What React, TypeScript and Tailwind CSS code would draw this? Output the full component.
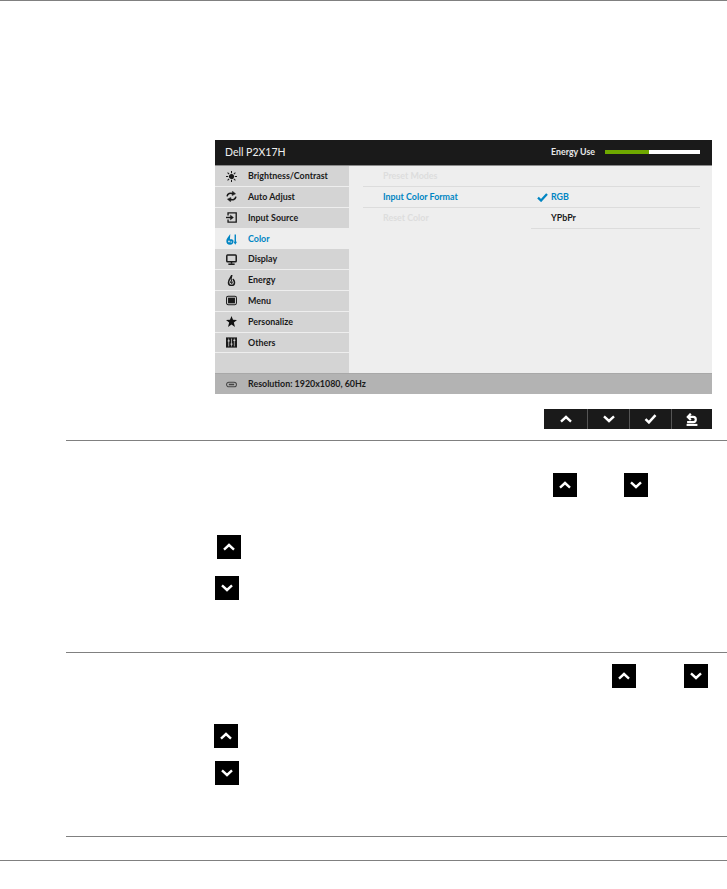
import React from "react";

const Up = () => (
  <svg width="12" height="8" viewBox="0 0 12 8" fill="none" stroke="white" strokeWidth="2.4">
    <path d="M1 6.6 L6 2 L11 6.6" />
  </svg>
);
const Down = () => (
  <svg width="12" height="8" viewBox="0 0 12 8" fill="none" stroke="white" strokeWidth="2.4">
    <path d="M1 1.4 L6 6 L11 1.4" />
  </svg>
);
const Check = ({ color = "white", w = 13, h = 10 }: { color?: string; w?: number; h?: number }) => (
  <svg width={w} height={h} viewBox="0 0 12 10" fill="none" stroke={color} strokeWidth="2.5">
    <path d="M1 5.2 L4.4 8.4 L11 1.2" />
  </svg>
);
const Back = () => (
  <svg width="12" height="13" viewBox="0 0 11 12" fill="none" stroke="white" strokeWidth="2">
    <path d="M0.5 11 H10.5" strokeWidth="1.9" />
    <path d="M1.6 3.6 H6.6 A2.4 2.4 0 0 1 6.6 8.4 H1" />
    <path d="M4.4 0.6 L1.6 3.6 L4.4 6.4" />
  </svg>
);

const InlineBtn = ({ kind, className = "" }: { kind: "up" | "down"; className?: string }) => (
  <span className={`flex h-6 w-6 shrink-0 items-center justify-center bg-black ${className}`}>
    {kind === "up" ? <Up /> : <Down />}
  </span>
);

const SunIcon = () => (
  <svg viewBox="0 0 14 14" fill="none" stroke="#1a1a1a" strokeWidth="1.3">
    <circle cx="7" cy="7" r="2.6" fill="#1a1a1a" />
    <path d="M7 0V2.8M7 11.2V14M0 7H2.8M11.2 7H14M2 2L4 4M10 10L12 12M2 12L4 10M10 4L12 2" />
  </svg>
);
const AutoIcon = () => (
  <svg viewBox="0 0 14 14" fill="none" stroke="#1a1a1a" strokeWidth="2">
    <path d="M1.4 6.8 C1.8 3.2 5.6 2 9 3.6" />
    <path d="M8.2 0.2 L12.2 3.6 L7.8 5.8 Z" fill="#1a1a1a" strokeWidth="0.6" />
    <path d="M12.6 7.2 C12.2 10.8 8.4 12 5 10.4" />
    <path d="M5.8 13.8 L1.8 10.4 L6.2 8.2 Z" fill="#1a1a1a" strokeWidth="0.6" />
  </svg>
);
const InputIcon = () => (
  <svg viewBox="0 0 14 14" fill="none" stroke="#1a1a1a" strokeWidth="1.7">
    <path d="M2.6 4.4V1.2H13V12.8H2.6V9.6" />
    <path d="M0 7H7" strokeWidth="1.8" />
    <path d="M5.6 3.8L9.6 7L5.6 10.2Z" fill="#1a1a1a" strokeWidth="0.4" />
  </svg>
);
const ColorIcon = () => (
  <svg viewBox="0 0 14 14" fill="none">
    <path d="M5.4 0 C3 3.6 0.4 6 0.4 9 A4.6 4.6 0 0 0 9.6 9 C9.6 7.2 7.4 6.4 5 6.8 C5 5 5.4 3 5.4 0Z" fill="#0085c3" />
    <circle cx="3.8" cy="9.4" r="1.1" fill="#eeeeee" />
    <circle cx="6.6" cy="10.2" r="0.9" fill="#eeeeee" />
    <path d="M11.8 0.6V10.6" stroke="#0085c3" strokeWidth="1.8" />
    <path d="M9.6 10H14L11.8 13.6Z" fill="#0085c3" />
  </svg>
);
const DisplayIcon = () => (
  <svg viewBox="0 0 14 14" fill="none" stroke="#1a1a1a" strokeWidth="1.9">
    <rect x="1" y="1.4" width="12" height="8.4" rx="1" />
    <path d="M7 10V12.4" />
    <path d="M3 13H11" />
  </svg>
);
const EnergyIcon = () => (
  <svg viewBox="0 0 14 14" fill="none" stroke="#1a1a1a" strokeWidth="1.9">
    <path d="M7.4 0 C6.8 3 3.2 5.8 3.2 9.4 A3.8 3.8 0 0 0 10.8 9.4 C10.8 7.4 9.4 6.6 9 5" />
    <path d="M7.4 0.4 C6.6 3.6 6.2 5 7 7 L5.8 9.4 L8 9 L7 11.6" strokeWidth="1.3" />
  </svg>
);
const MenuIcon = () => (
  <svg viewBox="0 0 14 14" fill="none" stroke="#1a1a1a" strokeWidth="1.3">
    <rect x="0.7" y="1.7" width="12.6" height="10.6" rx="2" />
    <rect x="2.6" y="3.4" width="8.8" height="7.2" fill="#1a1a1a" stroke="none" />
  </svg>
);
const StarIcon = () => (
  <svg viewBox="0 0 14 14" fill="#111">
    <path d="M7 0 L8.9 4.8 L14 5 L10 8.2 L11.4 14 L7 10.8 L2.6 14 L4 8.2 L0 5 L5.1 4.8Z" />
  </svg>
);
const OthersIcon = () => (
  <svg viewBox="0 0 14 14">
    <rect x="0" y="0.5" width="14" height="13" fill="#1a1a1a" />
    <path d="M3.4 2V12M7 2V12M10.6 2V12" stroke="#d4d4d4" strokeWidth="0.9" />
    <path d="M2.2 5H4.6M5.8 9H8.2M9.4 4.4H11.8" stroke="#d4d4d4" strokeWidth="1.5" />
  </svg>
);
const ResIcon = () => (
  <svg viewBox="0 0 14 14" fill="none" stroke="#444" strokeWidth="1.3">
    <rect x="0.7" y="4" width="12.6" height="6" rx="3" />
    <path d="M3.6 7H10.4" strokeWidth="2" />
  </svg>
);

const menu: { label: string; icon: React.ReactNode; active?: boolean }[] = [
  { label: "Brightness/Contrast", icon: <SunIcon /> },
  { label: "Auto Adjust", icon: <AutoIcon /> },
  { label: "Input Source", icon: <InputIcon /> },
  { label: "Color", icon: <ColorIcon />, active: true },
  { label: "Display", icon: <DisplayIcon /> },
  { label: "Energy", icon: <EnergyIcon /> },
  { label: "Menu", icon: <MenuIcon /> },
  { label: "Personalize", icon: <StarIcon /> },
  { label: "Others", icon: <OthersIcon /> },
];

const iconBox = "flex w-[14px] shrink-0 justify-center [&>svg]:h-[11px] [&>svg]:w-[11px]";

const Osd = () => (
  <div className="flex h-[254px] w-[497px] flex-col bg-[#eeeeee] font-['Lato',sans-serif]">
    <div className="flex h-[26px] shrink-0 items-center justify-between border-b border-[#8a8a8a] bg-[#1a1a1a] pl-[10px] pr-[12px]">
      <span className="text-[10.5px] leading-none text-[#f0f0f0]">Dell P2X17H</span>
      <div className="flex items-center">
        <span className="mr-[10px] text-[8.8px] font-bold leading-none text-[#e8e8e8]">Energy Use</span>
        <div className="flex h-[4px] w-[95px]">
          <div className="w-[44px] bg-[#6fa800]" />
          <div className="flex-1 bg-white" />
        </div>
      </div>
    </div>
    <div className="flex min-h-0 flex-1">
      <div className="flex w-[134px] shrink-0 flex-col bg-[#d4d4d4] pt-[0.3px]">
        {menu.map((m) => (
          <div
            key={m.label}
            className={
              m.active
                ? "flex h-[20.8px] items-center gap-[10px] bg-[#eeeeee] pl-[9px] text-[8.9px] font-bold leading-none text-[#0085c3]"
                : "flex h-[20.8px] items-center gap-[10px] border-b border-[#eeeeee] pl-[9px] text-[8.9px] font-bold leading-none text-[#1a1a1a]"
            }
          >
            <span className={iconBox}>{m.icon}</span>
            <span className="pt-px">{m.label}</span>
          </div>
        ))}
        <div className="flex-1" />
      </div>
      <div className="flex-1 pl-[14px] pr-[12px] text-[8.9px] font-bold leading-none">
        <div className="flex h-[21px] items-center border-b border-[#dcdcdc] pl-[20px] pt-px text-[#dddddd]">Preset Modes</div>
        <div className="flex h-[20.5px] items-center border-b border-[#dcdcdc] pl-[20px] pt-px">
          <span className="w-[154px] text-[#0085c3]">Input Color Format</span>
          <span className="flex w-[14px] justify-start"><Check color="#0085c3" w={11} h={9} /></span>
          <span className="text-[#0085c3]">RGB</span>
        </div>
        <div className="flex h-[20.5px] items-center pl-[20px] pt-px">
          <span className="w-[168px] text-[#dddddd]">Reset Color</span>
          <span className="text-[#1a1a1a]">YPbPr</span>
        </div>
        <div className="ml-[168px] h-px bg-[#dcdcdc]" />
      </div>
    </div>
    <div className="flex h-[21px] shrink-0 items-center gap-[10px] border-t border-[#a8a8a8] bg-[#b3b3b3] pl-[9px] text-[8.9px] font-bold leading-none text-[#1a1a1a]">
      <span className={iconBox}><ResIcon /></span>
      <span>Resolution: 1920x1080, 60Hz</span>
    </div>
  </div>
);

const OsdButtons = () => (
  <div className="flex h-5 w-[168px] bg-[#1a1a1a]">
    <span className="flex w-[44px] items-center justify-center border-r border-[#555555]"><Up /></span>
    <span className="flex w-[42px] items-center justify-center border-r border-[#555555]"><Down /></span>
    <span className="flex w-[42px] items-center justify-center border-r border-[#555555]"><Check /></span>
    <span className="flex flex-1 items-center justify-center"><Back /></span>
  </div>
);

export default function App() {
  return (
    <div className="h-[889px] w-[727px] overflow-hidden bg-white">
      <div className="h-px w-full bg-[#808080]" />
      <section className="h-[439px] pl-[215px] pt-[139px]">
        <Osd />
        <div className="ml-[329px] mt-[15px]">
          <OsdButtons />
        </div>
      </section>
      <section className="ml-[66px] h-[212px] border-t border-[#808080]">
        <div className="flex pt-[32px]">
          <InlineBtn kind="up" className="ml-[487px]" />
          <InlineBtn kind="down" className="ml-[47px]" />
        </div>
        <InlineBtn kind="up" className="ml-[151px] mt-[38px]" />
        <InlineBtn kind="down" className="ml-[149px] mt-[17px]" />
      </section>
      <section className="ml-[66px] h-[184px] border-t border-[#808080]">
        <div className="flex pt-[11px]">
          <InlineBtn kind="up" className="ml-[546px]" />
          <InlineBtn kind="down" className="ml-[48px]" />
        </div>
        <InlineBtn kind="up" className="ml-[148px] mt-[36px]" />
        <InlineBtn kind="down" className="ml-[149px] mt-[13px]" />
      </section>
      <div className="ml-[66px] h-[24px] border-t border-[#808080]" />
      <div className="h-px w-full bg-[#808080]" />
    </div>
  );
}
